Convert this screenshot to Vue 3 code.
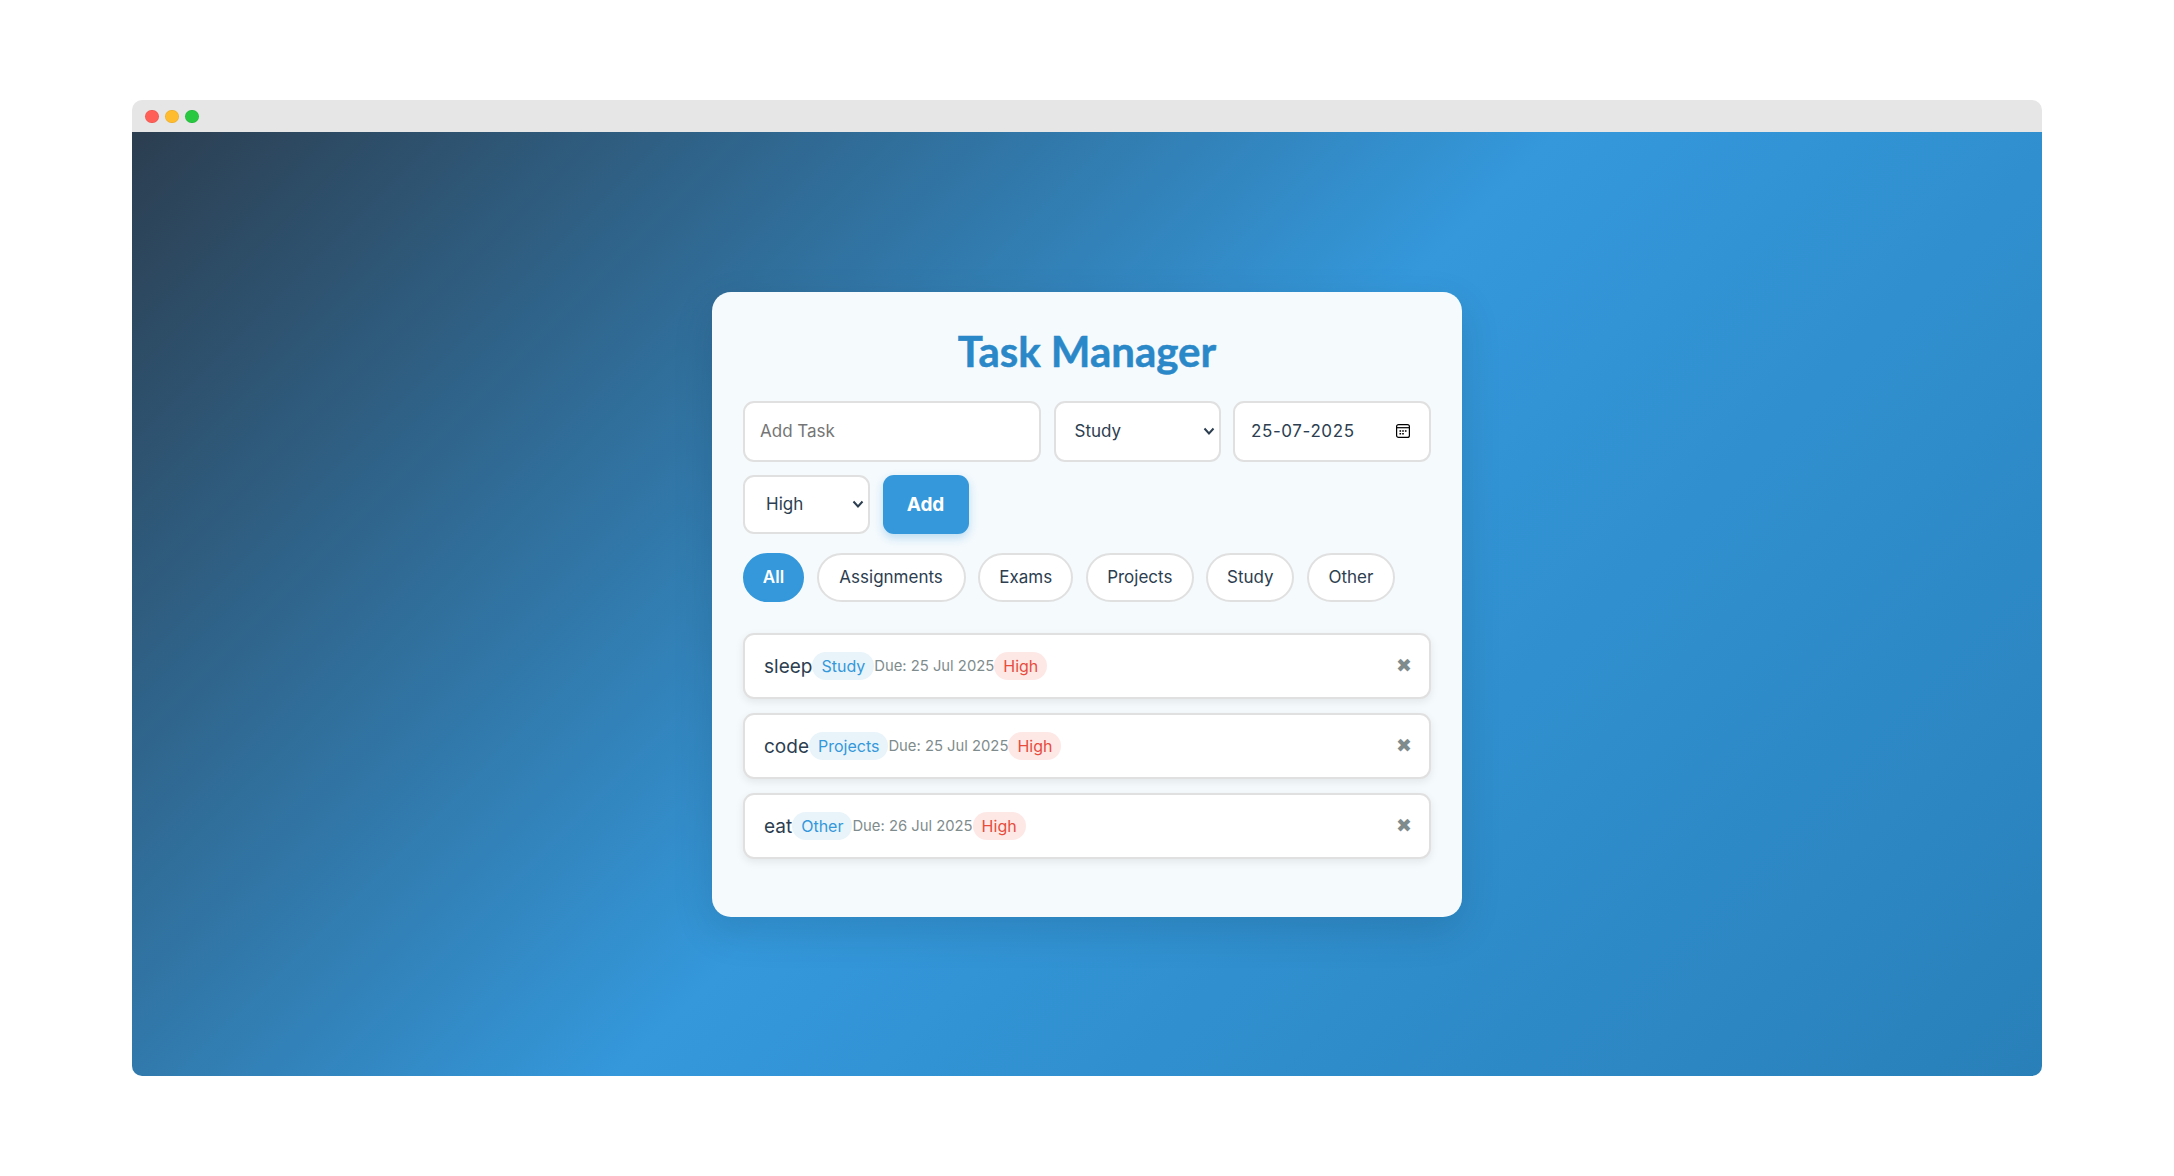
<script setup>
const filters = [
  { label: 'All', width: 61 },
  { label: 'Assignments', width: 149 },
  { label: 'Exams', width: 95 },
  { label: 'Projects', width: 108 },
  { label: 'Study', width: 88 },
  { label: 'Other', width: 88 }
]
const tasks = [
  { name: 'sleep', tag: 'Study', due: 'Due: 25 Jul 2025' },
  { name: 'code', tag: 'Projects', due: 'Due: 25 Jul 2025' },
  { name: 'eat', tag: 'Other', due: 'Due: 26 Jul 2025' }
]
</script>

<template>
  <div class="page">
    <div class="window">
      <div class="titlebar">
        <span class="dot red"></span>
        <span class="dot amber"></span>
        <span class="dot green"></span>
      </div>
      <div class="stage">
        <main class="card">
          <h1 class="title">Task Manager</h1>
          <div class="form">
            <input class="field task-input" type="text" placeholder="Add Task" />
            <select class="field select cat-select">
              <option>Study</option>
            </select>
            <div class="field date-field">
              <span class="date-text">25-07-2025</span>
              <svg class="cal" viewBox="0 0 14 14" width="14" height="14" fill="none">
                <rect x="0.6" y="0.6" width="12.8" height="12.8" rx="2" stroke="#000" stroke-width="1.2" />
                <path d="M1 3.7H13" stroke="#000" stroke-width="1.2" />
                <path d="M3.5 6.2h1.6v1.6H3.5zM6.2 6.2h1.6v1.6H6.2zM8.9 6.2h1.6v1.6H8.9zM3.5 9h1.6v1.6H3.5zM6.2 9h1.6v1.6H6.2z" fill="#000" />
              </svg>
            </div>
            <select class="field select pri-select">
              <option>High</option>
            </select>
            <button class="add-btn">Add</button>
          </div>
          <div class="filters">
            <button
              v-for="(f, i) in filters"
              :key="f.label"
              class="chip"
              :class="{ active: i === 0 }"
              :style="{ width: f.width + 'px' }"
            >{{ f.label }}</button>
          </div>
          <ul class="list">
            <li v-for="t in tasks" :key="t.name" class="task">
              <div class="info">
                <span class="name">{{ t.name }}</span>
                <span class="pill tag">{{ t.tag }}</span>
                <span class="due">{{ t.due }}</span>
                <span class="pill prio">High</span>
              </div>
              <span class="del">✖</span>
            </li>
          </ul>
        </main>
      </div>
    </div>
  </div>
</template>

<style>
html, body { margin: 0; background: #fff; }
</style>

<style scoped>
.page {
  width: 2174px;
  height: 1176px;
  box-sizing: border-box;
  padding: 100px 132px;
  background: #fff;
  font-family: Inter, "Open Sans", sans-serif;
  color: #2c3e50;
}
.window {
  height: 976px;
  display: flex;
  flex-direction: column;
  border-radius: 10px;
  overflow: hidden;
}
.titlebar {
  height: 32px;
  flex: none;
  box-sizing: border-box;
  padding: 1px 0 0 13.3px;
  display: flex;
  align-items: center;
  gap: 6.6px;
  background: #e6e6e6;
}
.dot {
  width: 13.4px;
  height: 13.4px;
  border-radius: 50%;
  box-shadow: inset 0 0 0 0.7px rgba(0, 0, 0, 0.07);
}
.red { background: #ff5f57; }
.amber { background: #febc2e; }
.green { background: #28c840; }
.stage {
  flex: 1;
  display: flex;
  align-items: center;
  justify-content: center;
  background: linear-gradient(135deg, #2c3e50 0%, #3498db 50%, #2980b9 100%);
}
.card {
  width: 750px;
  height: 625px;
  box-sizing: border-box;
  padding: 32px 31px;
  border-radius: 19px;
  background: #f5fafd;
  box-shadow: 0 14px 42px rgba(0, 0, 0, 0.12);
}
.title {
  margin: 0 0 21px;
  text-align: center;
  font-family: Lato, "Open Sans", sans-serif;
  font-size: 42px;
  line-height: 55px;
  padding-bottom: 1px;
  font-weight: 700;
  color: #2a88c9;
  -webkit-text-stroke: 0.5px #2a88c9;
}
.form {
  display: flex;
  flex-wrap: wrap;
  gap: 13px 12.5px;
}
.field {
  box-sizing: border-box;
  height: 61px;
  border: 2.8px solid #e0e0e0;
  border-radius: 11px;
  background: #fff;
  font-family: Inter, sans-serif;
  font-size: 17px;
  color: #2c3e50;
  outline: none;
}
.task-input { width: 298px; padding: 0 15px; }
.task-input::placeholder { color: #757575; opacity: 1; }
.select {
  appearance: none;
  padding: 0 19px;
  background: #fff url("data:image/svg+xml,%3Csvg xmlns='http://www.w3.org/2000/svg' viewBox='0 0 12 9'%3E%3Cpath d='M1.5 1.5 6 6.5l4.5-5' fill='none' stroke='%232c3e50' stroke-width='2'/%3E%3C/svg%3E") no-repeat right 4px center / 12px 9px;
}
.cat-select { width: 167px; }
.date-field {
  width: 198px;
  display: flex;
  align-items: center;
  justify-content: space-between;
  padding: 0 19px 0 16px;
}
.date-text { letter-spacing: 0.6px; }
.cal { display: block; }
.pri-select { width: 127px; height: 59px; padding-left: 21px; }
.add-btn {
  width: 86px;
  height: 59px;
  border: 0;
  border-radius: 11px;
  background: #3498db;
  color: #fff;
  font-family: Inter, sans-serif;
  font-size: 19px;
  font-weight: 700;
  box-shadow: 0 4px 10px rgba(52, 152, 219, 0.3);
}
.filters {
  display: flex;
  gap: 12.6px;
  margin-top: 19px;
}
.chip {
  height: 49px;
  padding: 0;
  box-sizing: border-box;
  border: 2.8px solid #e0e0e0;
  border-radius: 28px;
  background: #fff;
  font-family: Inter, sans-serif;
  font-size: 17px;
  color: #2c3e50;
}
.chip.active {
  background: #3498db;
  border-color: #3498db;
  color: #fff;
  font-weight: 600;
}
.list {
  list-style: none;
  margin: 31px 0 0;
  padding: 0;
  display: flex;
  flex-direction: column;
  gap: 14px;
}
.task {
  box-sizing: border-box;
  height: 66px;
  display: flex;
  align-items: center;
  justify-content: space-between;
  padding: 0 17px 0 19px;
  border: 2.8px solid #e0e0e0;
  border-radius: 11px;
  background: #fff;
  box-shadow: 0 3px 8px rgba(0, 0, 0, 0.08);
}
.info { display: flex; align-items: center; }
.name { font-size: 19px; padding-top: 2px; }
.pill {
  height: 28px;
  display: flex;
  align-items: center;
  padding: 0 9px;
  border-radius: 14px;
  font-size: 16px;
}
.tag { background: #e8f4fa; color: #3498db; }
.prio { background: #fde8e6; color: #e74c3c; }
.due { font-size: 14.8px; color: #7f8c8d; padding-top: 1px; }
.del {
  font-family: "DejaVu Sans", sans-serif;
  font-size: 19px;
  line-height: 1;
  color: #7f8c8d;
}
</style>
